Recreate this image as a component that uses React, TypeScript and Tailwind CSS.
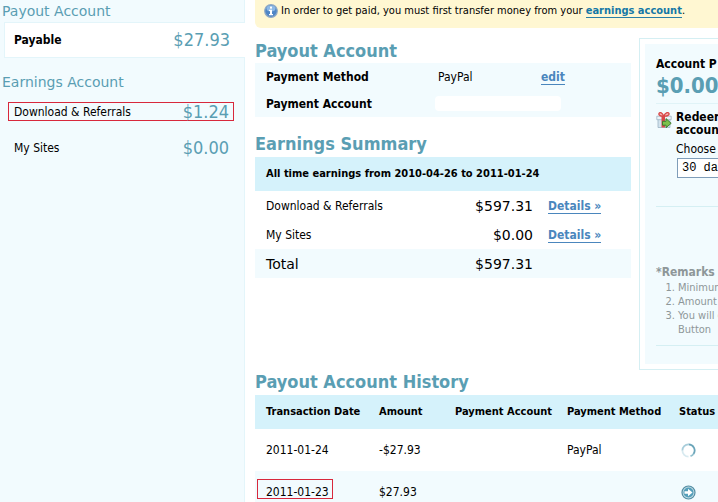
import type { ReactNode } from 'react';

const history = [
  { date: '2011-01-24', amount: '-$27.93', method: 'PayPal', status: 'pending', marked: false },
  { date: '2011-01-23', amount: '$27.93', method: '', status: 'transfer', marked: true },
];

const summary = [
  { name: 'Download & Referrals', amount: '$597.31' },
  { name: 'My Sites', amount: '$0.00' },
];

function InfoIcon() {
  return (
    <svg className="h-[14px] w-[14px] shrink-0" viewBox="0 0 14 14" aria-hidden="true">
      <circle cx="7" cy="7" r="6.3" fill="#4f86c6" stroke="#8fa9c4" strokeWidth="1.2" />
      <ellipse cx="7" cy="4.5" rx="4.5" ry="3" fill="#8db9e6" />
      <rect x="6" y="2.6" width="2" height="2" fill="#fff" />
      <path d="M5 5.8h3v4.2h1v1.2H5V10h1V7H5z" fill="#fff" />
    </svg>
  );
}

function GiftIcon() {
  return (
    <svg className="mt-px h-4 w-4 shrink-0" viewBox="0 0 16 16" aria-hidden="true">
      <path d="M2 7h12v8.500H2z" fill="#d3e3ee" stroke="#9db4c4" strokeWidth=".8" />
      <path d="M.8 4.200h14.400v3.500H.8z" fill="#edf3f7" stroke="#9db4c4" strokeWidth=".8" />
      <path d="M5.500 4H9v11.500H5.500z" fill="#d94848" />
      <path d="M7.500 4C5 4.300 2.300 3.400 3 1.500S6.800.8 7.500 4zM8 4c2.500.3 5.700-.6 5-2.500S8.700.8 8 4z" fill="#f6b4b4" stroke="#d84848" strokeWidth="1.300" />
      <path d="M6.500 9.300H10V6.600l5.200 4.700L10 15.700v-2.500H6.500z" fill="#7cc04b" stroke="#35762a" strokeWidth=".9" />
    </svg>
  );
}

function StatusIcon({ status }: { status: string }) {
  if (status === 'pending') {
    return (
      <svg className="h-[15px] w-[15px]" viewBox="0 0 15 15" fill="none" strokeWidth="1.8" role="img" aria-label="Pending">
        <path d="M7.500 1.400A6.100 6.100 0 0 1 12.500 11" stroke="#6aa5b9" />
        <path d="M12.500 11A6.100 6.100 0 0 1 9.500 13.200" stroke="#93c0ce" />
        <path d="M7.500 13.600A6.100 6.100 0 0 1 1.400 7.500" stroke="#d8eaf0" />
        <path d="M1.400 7.500A6.100 6.100 0 0 1 7.500 1.400" stroke="#a9cedb" />
      </svg>
    );
  }
  return (
    <svg className="h-[15px] w-[15px]" viewBox="0 0 15 15" role="img" aria-label="Transferred">
      <circle cx="7.500" cy="7.500" r="6.500" fill="#c4dce5" stroke="#528da3" strokeWidth="1.200" />
      <circle cx="7.500" cy="7.500" r="5" fill="#559fba" />
      <path d="M3.500 6.300H7V3.800l4.500 3.700L7 11.200V8.700H3.500z" fill="#fff" />
    </svg>
  );
}

function SideTitle({ children }: { children: ReactNode }) {
  return (
    <h2 className="h-[22px] pl-[2px] font-['DejaVu_Sans',sans-serif] text-sm leading-[22px] text-[#5a9eb3]">{children}</h2>
  );
}

function SideRow({ label, amount, className = '' }: { label: string; amount: string; className?: string }) {
  return (
    <div className={`flex items-center justify-between ${className}`}>
      <span>{label}</span>
      <span className="text-lg font-normal text-[#5a9eb3]">{amount}</span>
    </div>
  );
}

function Title({ children }: { children: ReactNode }) {
  return <h2 className="h-6 text-lg leading-6 font-bold text-[#5a9eb3]">{children}</h2>;
}

function Sidebar() {
  return (
    <aside className="w-[245px] shrink-0 border-r border-[#e3f5fa] bg-[#f2fbfe]">
      <SideTitle>Payout Account</SideTitle>
      <SideRow label="Payable" amount="$27.93" className="-mr-px ml-1 h-9 border border-r-0 border-[#e3f5fa] bg-white pr-[15px] pl-[9px] font-bold" />
      <div className="mt-[13px]">
        <SideTitle>Earnings Account</SideTitle>
      </div>
      <SideRow label="Download & Referrals" amount="$1.24" className="mt-[9px] mr-[10px] ml-2 h-[19px] border border-[#d8283c] pr-1 pl-[5px]" />
      <SideRow label="My Sites" amount="$0.00" className="mt-4 mr-[10px] ml-2 h-[22px] border border-transparent pr-1 pl-[5px]" />
    </aside>
  );
}

function AccountPanel() {
  return (
    <section className="mt-[10px] ml-2 w-[300px] shrink-0 self-start border border-[#d5eff3] p-[5px]">
      <div className="bg-[#f2fbfe] px-[11px] pt-[10px] pb-[18px]">
        <div className="h-5 leading-5 font-bold">Account P</div>
        <div className="h-[30px] border-b border-[#e0f3f7] text-[22px] leading-6 font-bold text-[#5a9eb3]">$0.00</div>
        <div className="flex h-[103px] gap-1 border-b border-[#d5eff3] pt-[7px]">
          <GiftIcon />
          <div className="min-w-0">
            <div className="leading-[13px] font-bold">
              Redeem
              <br />
              account
            </div>
            <label htmlFor="period" className="mt-[3px] block h-[18px] leading-[18px]">Choose</label>
            <select id="period" className="ml-px h-5 w-[120px] appearance-none border border-[#7f9db9] bg-white px-1 font-['Liberation_Mono',monospace] text-xs leading-4">
              <option>30 days</option>
            </select>
          </div>
        </div>
        <div className="border-b border-[#d5eff3] pt-[57px] pb-2 text-[11px] text-[#8e9799]">
          <h3 className="h-[17px] text-xs leading-[17px] font-bold">*Remarks</h3>
          <ol className="list-outside list-decimal pl-[22px] leading-[14px]">
            <li>Minimum</li>
            <li>Amount</li>
            <li>
              You will e
              <br />
              Button
            </li>
          </ol>
        </div>
      </div>
    </section>
  );
}

export default function App() {
  return (
    <div className="flex h-screen overflow-hidden bg-white font-['DejaVu_Sans_Condensed','DejaVu_Sans',sans-serif] text-xs text-black">
      <Sidebar />
      <main className="min-w-[700px] flex-1 shrink-0 pl-[10px]">
        <p className="flex h-7 items-start gap-[3px] rounded-b-md bg-[#fff7d2] pt-1 pl-[9px] text-[11px] leading-[14px]">
          <InfoIcon />
          <span>
            In order to get paid, you must first transfer money from your{' '}
            <a href="#earnings" className="border-b border-[#287fa8] font-bold text-[#1478a6]">earnings account</a>.
          </span>
        </p>

        <div className="flex h-[342px]">
          <div className="w-[376px] shrink-0 pt-[11px]">
            <Title>Payout Account</Title>
            <table className="w-full table-fixed bg-[#f2fbfe]">
              <tbody>
                <tr className="h-[27px]">
                  <th scope="row" className="w-[183px] pl-[11px] text-left">Payment Method</th>
                  <td className="w-[103px]">PayPal</td>
                  <td><a href="#edit" className="border-b border-[#4a86bd] font-bold text-[#4a86bd]">edit</a></td>
                </tr>
                <tr className="h-[27px]">
                  <th scope="row" className="pl-[11px] text-left">Payment Account</th>
                  <td colSpan={2}><div className="-ml-[3px] h-[15px] w-[126px] rounded-sm bg-white" /></td>
                </tr>
              </tbody>
            </table>

            <div className="mt-[15px]">
              <Title>Earnings Summary</Title>
            </div>
            <table className="mt-px w-full table-fixed">
              <colgroup>
                <col className="w-[180px]" />
                <col className="w-[98px]" />
                <col />
              </colgroup>
              <thead>
                <tr className="h-[34px] bg-[#d5f2fb]">
                  <th colSpan={3} className="pl-[11px] text-left text-[11px]">All time earnings from 2010-04-26 to 2011-01-24</th>
                </tr>
              </thead>
              <tbody>
                {summary.map((row) => (
                  <tr key={row.name} className="h-[29px]">
                    <td className="pl-[11px]">{row.name}</td>
                    <td className="text-right font-['DejaVu_Sans',sans-serif] text-sm font-medium">{row.amount}</td>
                    <td className="pl-[15px]">
                      <a href="#details" className="border-b border-[#4a86bd] font-bold text-[#4a86bd]">Details »</a>
                    </td>
                  </tr>
                ))}
              </tbody>
              <tfoot>
                <tr className="h-[29px] bg-[#f2fbfe] font-['DejaVu_Sans',sans-serif] text-sm font-medium">
                  <td className="pl-[11px]">Total</td>
                  <td className="text-right">$597.31</td>
                  <td />
                </tr>
              </tfoot>
            </table>
          </div>
          <AccountPanel />
        </div>

        <Title>Payout Account History</Title>
        <table className="mt-px w-full table-fixed">
          <thead>
            <tr className="h-[34px] bg-[#d5f2fb] text-left text-[11px]">
              <th className="w-[124px] pl-[11px]">Transaction Date</th>
              <th className="w-[76px]">Amount</th>
              <th className="w-[112px]">Payment Account</th>
              <th className="w-[112px]">Payment Method</th>
              <th>Status</th>
            </tr>
          </thead>
          <tbody>
            {history.map((row) => (
              <tr key={row.date} className="h-[42px] even:bg-[#f2fbfe]">
                <td className={row.marked ? 'pl-[2px]' : 'pl-[11px]'}>
                  {row.marked ? (
                    <div className="mb-[6px] h-5 w-[76px] border border-[#d8283c] pl-2 leading-6">{row.date}</div>
                  ) : (
                    row.date
                  )}
                </td>
                <td>{row.amount}</td>
                <td />
                <td>{row.method}</td>
                <td className="pl-[2px]"><StatusIcon status={row.status} /></td>
              </tr>
            ))}
          </tbody>
        </table>
      </main>
    </div>
  );
}
